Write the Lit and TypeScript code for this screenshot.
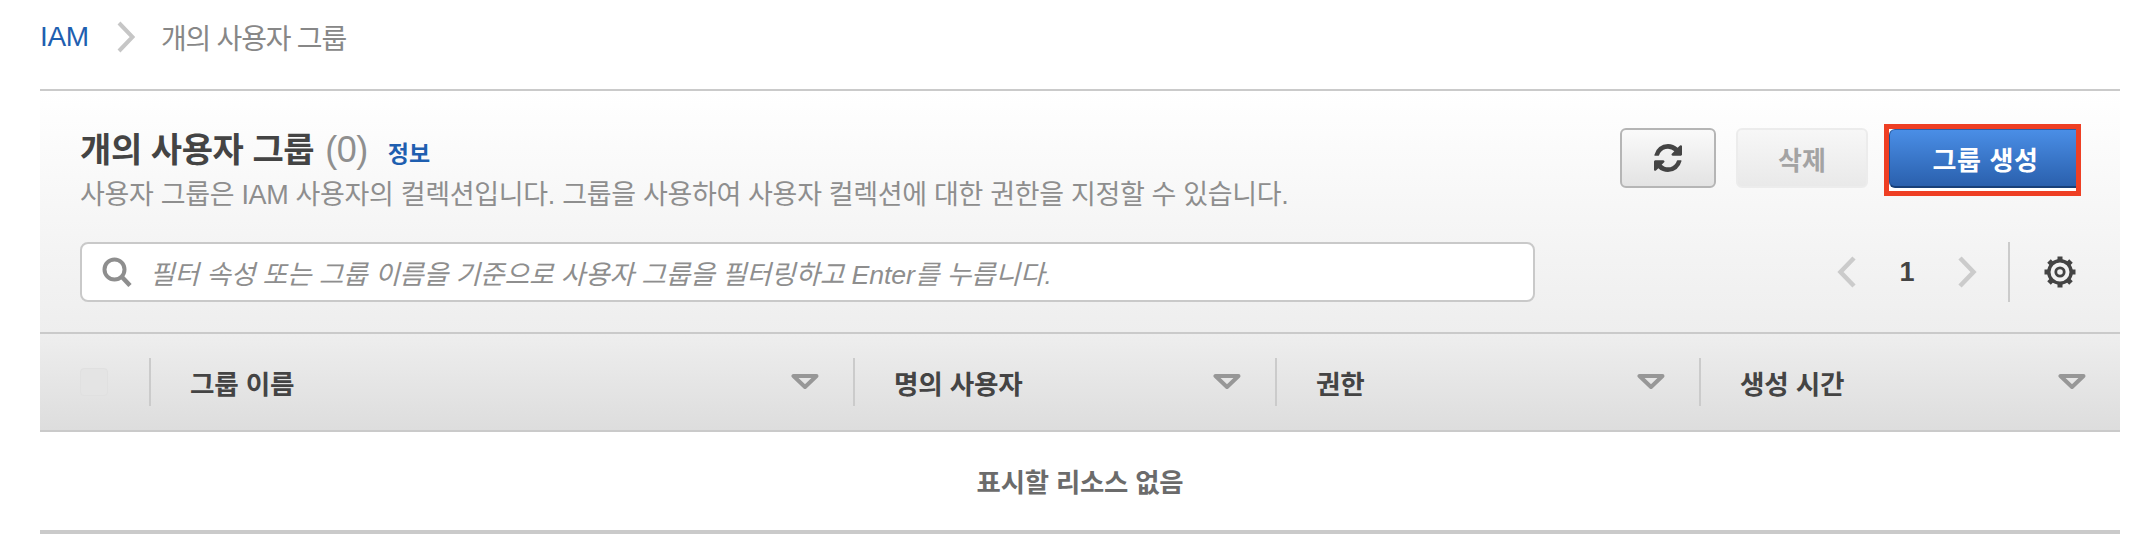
import { LitElement, html, css, svg } from "lit";
import { customElement } from "lit/decorators.js";

const sortIcon = svg`<svg width="28" height="16" viewBox="0 0 28 16"><path d="M2.5 2H25.5L14 13Z" fill="none" stroke="#979797" stroke-width="4" stroke-linejoin="round"/></svg>`;

@customElement("app-root")
export class AppRoot extends LitElement {
  static styles = css`
    :host { display: block; width: 2142px; height: 540px; background: #fff; overflow: hidden;
      font-family: "Liberation Sans", "Noto Sans CJK KR", sans-serif; color: #444; }
    .crumbs { display: flex; align-items: center; height: 89px; padding: 0 0 16px 40px; box-sizing: border-box; font-size: 28px; }
    .crumb-link { color: #1f5fb0; letter-spacing: -0.3px; }
    .crumb-sep { margin: 0 26px 0 28px; display: block; }
    .crumb-cur { color: #878787; letter-spacing: -1.2px; }
    .panel { margin: 0 22px 0 40px; border-top: 2px solid #cacaca; }
    .head { height: 241px; box-sizing: border-box; background: linear-gradient(#fff, #eee); display: flex; flex-direction: column; padding: 37px 0 0 40px; }
    .top { display: flex; justify-content: space-between; height: 114px; }
    .title-line { display: flex; align-items: baseline; line-height: 40px; margin-top: 2px; }
    h1 { margin: 0; font-size: 34px; font-weight: 700; color: #444; letter-spacing: -0.4px; }
    .count { font-size: 36px; color: #8f8f8f; font-weight: 400; margin-left: 11px; letter-spacing: -0.5px; }
    .info { font-size: 23px; font-weight: 700; color: #1f5fb0; margin-left: 20px; }
    .desc { font-size: 27px; color: #8e8e8e; line-height: 34px; margin-top: 4px; letter-spacing: -0.33px; white-space: nowrap; }
    .actions { display: flex; align-items: flex-start; }
    .btn { box-sizing: border-box; height: 60px; border-radius: 6px; display: flex; align-items: center; justify-content: center; font-family: inherit; font-size: 26px; font-weight: 700; }
    .refresh { width: 96px; border: 2px solid #b5b5b5; background: linear-gradient(#fafafa, #e3e3e3); }
    .delete { width: 132px; margin-left: 20px; border: 2px solid #ececec; background: linear-gradient(#f7f7f7, #e9e9e9); color: #a3a3a3; }
    .hl { margin-left: 16px; margin-right: 39px; border: 5px solid #ee3f24; background: #fff; width: 197px; height: 72px; box-sizing: border-box; margin-top: -4px; overflow: hidden; }
    .primary { width: 192px; height: 59px; background: linear-gradient(#4a8ee6, #2a60ad); border: 0; border-bottom: 2px solid #173f78; border-top: 1px solid #2a5ea8; border-left: 1px solid #1f5296; color: #fff; font-size: 26px; letter-spacing: 0.6px; }
    .tools { display: flex; align-items: center; height: 60px; }
    .search { width: 1455px; height: 60px; box-sizing: border-box; border: 2px solid #c9c9c9; border-radius: 8px; background: #fff; display: flex; align-items: center; padding-left: 20px; }
    .ph { margin-left: 18px; font-size: 26.7px; font-style: italic; color: #8e8e8e; letter-spacing: -0.1px; white-space: nowrap; }
    .pager { margin-left: auto; display: flex; align-items: center; }
    .page-no { width: 100px; text-align: center; font-size: 27px; font-weight: 700; color: #444; }
    .sep { width: 2px; height: 60px; background: #cbcbcb; margin-left: 31px; }
    .gear { margin: 0 44px 0 34px; }
    .thead { display: grid; grid-template-columns: 109px 704px 422px 424px 421px; height: 100px; box-sizing: border-box; align-items: center; border-top: 2px solid #cacaca; border-bottom: 2px solid #cacaca; background: linear-gradient(#eee, #ddd); }
    .th { display: flex; align-items: center; height: 48px; box-sizing: border-box; border-left: 2px solid #cbcbcb; padding: 0 34px 0 39px; font-size: 26.6px; font-weight: 700; color: #444; justify-content: space-between; letter-spacing: -0.2px; }
    .cb-cell { padding-left: 40px; }
    .cb { width: 28px; height: 28px; border-radius: 4px; background: #e4e4e4; border: 1px solid #e0e0e0; box-sizing: border-box; }
    .empty { height: 96px; padding-bottom: 2px; display: flex; align-items: center; justify-content: center; font-size: 26.4px; font-weight: 700; color: #6b6b6b; letter-spacing: -0.2px; border-bottom: 4px solid #cacaca; }
    svg { display: block; flex: none; }
  `;

  render() {
    return html`
      <nav class="crumbs">
        <span class="crumb-link">IAM</span>
        <svg class="crumb-sep" width="18" height="32" viewBox="0 0 18 32"><path d="M2 2L15.5 16L2 30" fill="none" stroke="#c6c6c6" stroke-width="4"/></svg>
        <span class="crumb-cur">개의 사용자 그룹</span>
      </nav>
      <section class="panel">
        <div class="head">
          <div class="top">
            <div>
              <div class="title-line">
                <h1>개의 사용자 그룹</h1><span class="count">(0)</span><a class="info">정보</a>
              </div>
              <div class="desc">사용자 그룹은 IAM 사용자의 컬렉션입니다. 그룹을 사용하여 사용자 컬렉션에 대한 권한을 지정할 수 있습니다.</div>
            </div>
            <div class="actions">
              <button class="btn refresh" aria-label="새로 고침">
                <svg width="28" height="28" viewBox="128 128 1536 1536" fill="#444">
                  <path d="M1639 1056q0 5-1 7-64 268-268 434.5t-478 166.5q-146 0-282.5-55t-243.5-157l-129 129q-19 19-45 19t-45-19-19-45v-448q0-26 19-45t45-19h448q26 0 45 19t19 45-19 45l-137 137q71 66 161 102t187 36q134 0 250-65t186-179q11-17 53-117 8-23 30-23h192q13 0 22.5 9.5t9.5 22.5zm25-800v448q0 26-19 45t-45 19h-448q-26 0-45-19t-19-45 19-45l138-138q-148-137-349-137-134 0-250 65t-186 179q-11 17-53 117-8 23-30 23h-199q-13 0-22.5-9.5t-9.5-22.5v-7q65-268 270-434.5t480-166.5q146 0 284 55.5t245 156.5l130-129q19-19 45-19t45 19 19 45z"/>
                </svg>
              </button>
              <button class="btn delete">삭제</button>
              <div class="hl"><button class="btn primary">그룹 생성</button></div>
            </div>
          </div>
          <div class="tools">
            <div class="search">
              <svg width="30" height="30" viewBox="0 0 30 30"><circle cx="12.5" cy="12.5" r="10" fill="none" stroke="#8e8e8e" stroke-width="4"/><path d="M19.5 19.5L28 28.5" stroke="#8e8e8e" stroke-width="4.5" fill="none"/></svg>
              <span class="ph">필터 속성 또는 그룹 이름을 기준으로 사용자 그룹을 필터링하고 Enter를 누릅니다.</span>
            </div>
            <div class="pager">
              <svg width="20" height="32" viewBox="0 0 20 32"><path d="M17 2L3.5 16L17 30" fill="none" stroke="#cbcbcb" stroke-width="4.5"/></svg>
              <span class="page-no">1</span>
              <svg width="20" height="32" viewBox="0 0 20 32"><path d="M3 2L16.5 16L3 30" fill="none" stroke="#cbcbcb" stroke-width="4.5"/></svg>
              <span class="sep"></span>
              <svg class="gear" width="32" height="32" viewBox="0 0 32 32">
                <circle cx="16" cy="16" r="11.2" fill="none" stroke="#444" stroke-width="3.4"/>
                <circle cx="16" cy="16" r="4.2" fill="none" stroke="#444" stroke-width="2.8"/>
                <path stroke="#444" stroke-width="5" d="M16 0.5V5M16 27V31.5M0.5 16H5M27 16H31.5M5 5L8.2 8.2M23.8 23.8L27 27M5 27L8.2 23.8M23.8 8.2L27 5"/>
              </svg>
            </div>
          </div>
        </div>
        <div class="thead">
          <div class="cb-cell"><div class="cb"></div></div>
          <div class="th"><span>그룹 이름</span>${sortIcon}</div>
          <div class="th"><span>명의 사용자</span>${sortIcon}</div>
          <div class="th"><span>권한</span>${sortIcon}</div>
          <div class="th"><span>생성 시간</span>${sortIcon}</div>
        </div>
        <div class="empty">표시할 리소스 없음</div>
      </section>
    `;
  }
}
